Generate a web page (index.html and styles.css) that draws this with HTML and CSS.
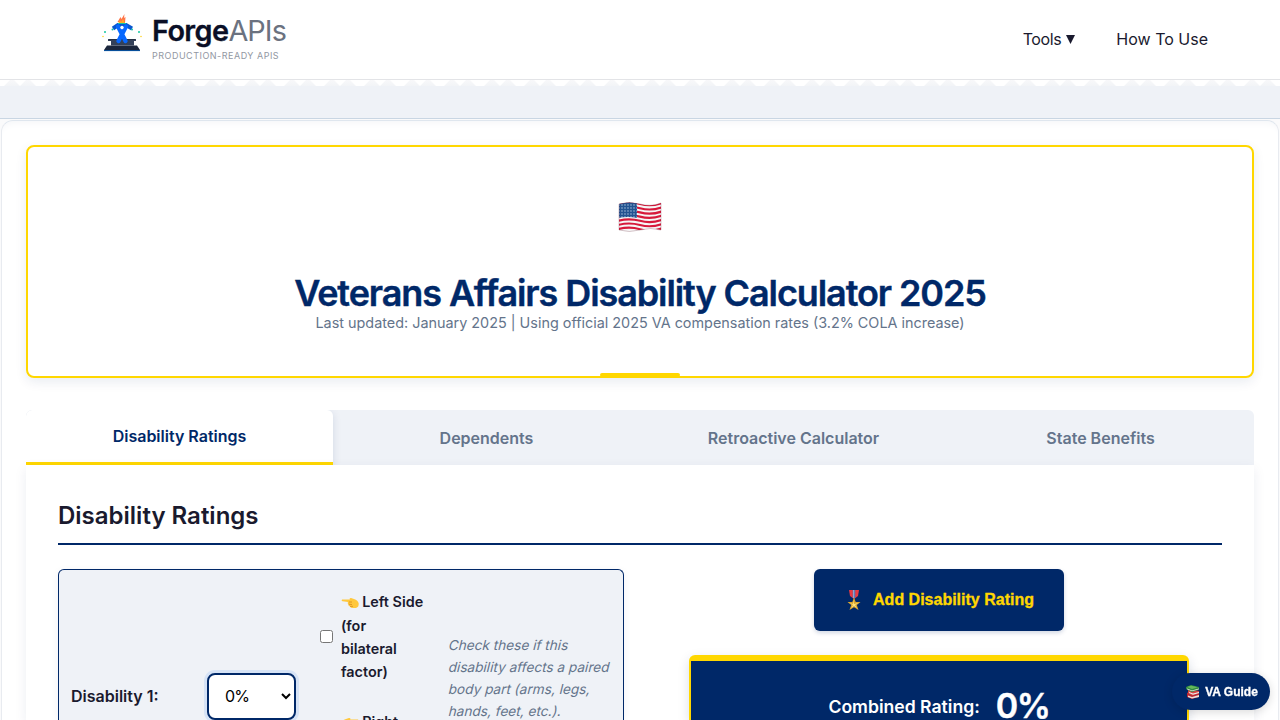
FILE: index.html
```html
<!DOCTYPE html>
<html lang="en">
<head>
<meta charset="utf-8">
<title>Veterans Affairs Disability Calculator 2025</title>
<link rel="stylesheet" href="styles.css">
</head>
<body>
<header class="site-header">
  <a class="brand">
    <svg class="brand-mark" viewBox="0 0 42 40" width="42" height="40">
      <path d="M3 37 6 32.500H36L39 37V38H3Z" fill="#1b263c"/><path d="M3 37.600H39" stroke="#0754a5"/>
      <path d="M7 26H35V28H33V32.500H10V28H7Z" fill="#34415a"/><path d="M8 26.500H34" stroke="#263044"/>
      <path d="M16.500 9 19.500 4 20.500 6 23.500 1 23 5 24.500 4 24 10Z" fill="#ff7547"/><path d="M17 11 19 7 20 9 22 6 24 11Z" fill="#ffad25"/>
      <path d="M12 15.500 17 12H25L31 15.500" fill="none" stroke="#0857d0" stroke-width="4"/>
      <path d="M17 13.500 24.500 28M25 13.500 17.500 28" fill="none" stroke="#0868ff" stroke-width="4.300" stroke-linecap="round"/>
      <circle cx="21" cy="14.500" r="1.700" fill="#fff"/>
      <path d="M17 10.500H25" stroke="#17c6a1"/>
      <circle cx="11.500" cy="16.500" r="1" fill="#14bea5"/><circle cx="31" cy="16.500" r="1" fill="#14bea5"/>
      <circle cx="4" cy="19" r="1" fill="#15c7a0"/><circle cx="38" cy="19" r="1" fill="#15c7a0"/>
      <circle cx="2" cy="23.500" r=".8" fill="#ffd32a"/><circle cx="40" cy="23.500" r=".8" fill="#ffd32a"/>
    </svg>
    <span class="brand-text"><span class="brand-name"><b>Forge</b><i>APIs</i></span><span class="tagline">PRODUCTION-READY APIS</span></span>
  </a>
  <nav class="nav"><a class="tools">Tools <svg class="caret" width="9" height="9" viewBox="0 0 9 9"><path d="M0 0H9L4.500 9Z" fill="#1a1a2e"/></svg></a><a>How To Use</a></nav>
</header>
<div class="strip">
  <svg class="zigzag" width="1280" height="6"><defs><linearGradient id="fade" x1="0" y1="0" x2="0" y2="1"><stop stop-color="#f8f8fa"/><stop offset="1" stop-color="#f2f4f7"/></linearGradient><pattern id="teeth" width="40" height="6" patternUnits="userSpaceOnUse"><path d="M4 6 10 0H14L20 6 26 0H30L36 6Z" fill="url(#fade)"/></pattern></defs><rect width="1280" height="6" fill="url(#teeth)"/></svg>
</div>
<main class="container">
  <section class="hero">
    <svg class="flag" width="44" height="32" viewBox="0 0 44 32">
      <defs>
        <clipPath id="wave"><path d="M1 3Q11 0 22 3T43 2V29Q33 26 22 29T1 29Z"/></clipPath>
        <pattern id="stars" width="3" height="3" patternUnits="userSpaceOnUse"><rect width="3" height="3" fill="#235391"/><circle cx="1" cy="1" r=".65" fill="#bfd3e8"/></pattern>
      </defs>
      <g clip-path="url(#wave)"><rect width="44" height="32" fill="#f6f6f6"/>
        <g fill="none" stroke="#d7193b" stroke-width="2.150"><path d="M0 3Q11 0 22 3T44 2"/><path d="M0 7.200Q11 4.200 22 7.200T44 6.200"/><path d="M0 11.400Q11 8.400 22 11.400T44 10.400"/><path d="M0 15.600Q11 12.600 22 15.600T44 14.600"/><path d="M0 19.800Q11 16.800 22 19.800T44 18.800"/><path d="M0 24Q11 21 22 24T44 23"/><path d="M0 28.200Q11 25.200 22 28.200T44 27.200"/></g>
        <path d="M0 1H19V17Q10 15 0 17Z" fill="url(#stars)"/>
      </g>
      <path d="M1 3Q11 0 22 3T43 2V29Q33 26 22 29T1 29Z" fill="none" stroke="#641b30" stroke-opacity=".35" stroke-width=".7"/>
    </svg>
    <h1>Veterans Affairs Disability Calculator 2025</h1>
    <p>Last updated: January 2025 | Using official 2025 VA compensation rates (3.2% COLA increase)</p>
    <span class="hero-accent"></span>
  </section>
  <div class="tabs"><button class="tab active">Disability Ratings</button><button class="tab">Dependents</button><button class="tab">Retroactive Calculator</button><button class="tab">State Benefits</button></div>
  <section class="panel">
    <h2>Disability Ratings</h2>
    <div class="columns">
      <div class="rating-row">
        <label class="rating-label">Disability 1:</label>
        <select class="rating-select"><option>0%</option></select>
        <div class="sides">
          <label class="side"><input type="checkbox"><span><svg class="hand" width="18" height="12" viewBox="0 0 18 12"><path d="M1 2.500Q0 4 1.500 4.300L7 5Q6 6.500 7.500 7.200 7 9 9 9.400 9.500 11 12 11H15Q18 10 17.700 6.500 17 3 13 2L10 1Q8 .8 8.800 2.600Z" fill="#ffc83d"/><path d="M7.500 7.200 11 7.500M9 9.400 12 9.300M8 5H11" fill="none" stroke="#d88c20" stroke-width=".8"/></svg> Left Side (for bilateral factor)</span></label>
          <label class="side"><span class="side-next"><svg class="hand" width="18" height="12" viewBox="0 0 18 12"><path d="M17 2.500Q18 4 16.500 4.300L11 5Q12 6.500 10.500 7.200 11 9 9 9.400 8.500 11 6 11H3Q0 10 .3 6.500 1 3 5 2L8 1Q10 .8 9.200 2.600Z" fill="#ffc83d"/></svg> Right</span></label>
        </div>
        <p class="hint"><span>Check these if this</span><span>disability affects a paired</span><span>body part (arms, legs,</span><span>hands, feet, etc.).</span></p>
      </div>
      <div class="summary">
        <button class="add"><svg width="14" height="21" viewBox="0 0 14 21"><path d="M2 0H12L11 6 7 9 3 6Z" fill="#e83a43"/><path d="M5.700 0H8.300V8H5.700Z" fill="#526eb0"/><path d="M6.700 0V8" stroke="#d9dced" stroke-width=".6"/><path d="M7 7.500 8.700 12H13.500L9.800 15 11.500 20 7 17.200 2.500 20 4.200 15 .5 12H5.300Z" fill="#d9a62f"/><path d="M7 10V14L11.500 13 8 15 10 18 7 16 4 18 6 15 2.500 13 6 14Z" fill="#ffe37c"/></svg><span>Add Disability Rating</span></button>
        <div class="result"><span class="result-label">Combined Rating:</span><strong>0%</strong></div>
      </div>
    </div>
  </section>
</main>
<button class="guide"><svg width="14" height="14" viewBox="0 0 14 14"><path d="M1 8 5 6 13 8V12L6 14 1 12Z" fill="#ba2732"/><path d="M2 10.500 6 12 13 10V12L6 13.500 2 12Z" fill="#eee2dc"/><path d="M2 5 6 4 13 6V8.500L6 10.500 2 8Z" fill="#d84845"/><path d="M3 7 7 8.500 13 7V8L7 9.700 3 8Z" fill="#eee"/><path d="M0 2 5 0 13 2V4.500L6 7 0 4Z" fill="#318b42"/><path d="M1 3.500 6 5.500 13 3.500V4.200L6 6.300 1 4.300Z" fill="#e7eee1"/><path d="M1 2 5 .8 12 2.300 6 4Z" fill="#65b85b"/></svg><span>VA Guide</span></button>
</body>
</html>
```
FILE: styles.css
```css
* { box-sizing: border-box; }
html, body { height: 720px; overflow: hidden; }
body { margin: 0; background: #fafafb; color: #1a1a2e; font-family: Inter, "Liberation Sans", sans-serif; line-height: 1.6; display: flex; flex-direction: column; }
button { border: 0; padding: 0; }
.site-header { height: 80px; flex: none; display: flex; justify-content: space-between; padding: 0 72px 0 101px; background: #fff; border-bottom: 1px solid #e3e4e7; }
.brand { display: flex; gap: 9px; padding-top: 13px; }
.brand-text { display: flex; flex-direction: column; }
.brand-name { display: flex; height: 36px; font-size: 28.8px; line-height: 36px; color: #0a0f26; }
.brand-name b { font-weight: 600; letter-spacing: -.6px; -webkit-text-stroke: .3px #0a0f26; }
.brand-name i { font-style: normal; font-weight: 400; color: #6b7280; letter-spacing: -.9px; }
.tagline { font-size: 9px; line-height: 14px; letter-spacing: .5px; color: #9297a2; }
.nav { display: flex; align-items: center; gap: 41px; font-size: 16px; }
.tools { letter-spacing: -.4px; }
.caret { margin-left: 1px; vertical-align: 1px; }
.strip { height: 39px; flex: none; background: #eff2f7; border-bottom: 1px solid #c9d6e3; }
.zigzag { display: block; background: #fff; }
.container { margin: 1px 1px 0; flex: 1; min-height: 0; overflow: hidden; padding: 24px 24px 0; background: #fff; border: 1px solid #e8ebf0; border-top-color: #dfe6ee; border-bottom: 0; border-radius: 12px 12px 0 0; box-shadow: inset 0 8px 8px -7px #f3f4f7; display: flex; flex-direction: column; }
.hero { position: relative; height: 233px; flex: none; border: 2px solid #ffd700; border-radius: 8px; display: flex; flex-direction: column; align-items: center; box-shadow: 0 4px 12px rgba(0,40,104,.09); background: #fff; }
.flag { margin-top: 54px; flex: none; }
.hero h1 { margin: 39px 0 0; font-size: 36px; line-height: 43px; font-weight: 600; color: #002868; letter-spacing: -1.09px; -webkit-text-stroke: .4px #002868; white-space: nowrap; }
.hero p { margin: -4px 0 0; font-size: 14.4px; line-height: 23px; color: #64748b; }
.hero-accent { position: absolute; bottom: -1px; left: 572px; width: 80px; height: 4px; background: #ffd700; border-radius: 2px; }
.tabs { display: grid; grid-template-columns: repeat(4, 1fr); height: 55px; flex: none; margin-top: 32px; border-radius: 6px 6px 0 0; overflow: hidden; background: #eff2f7; }
.tab { background: none; font: 600 16px Inter, sans-serif; color: #64748b; }
.tab.active { background: #fff; color: #002868; border-bottom: 3px solid #ffd700; border-radius: 6px 6px 0 0; box-shadow: 0 2px 8px rgba(0,40,104,.12); }
.panel { flex: 1; min-height: 0; display: flex; flex-direction: column; padding: 32px 32px 0; background: #fff; box-shadow: 0 4px 12px rgba(0,40,104,.08); }
.panel h2 { height: 48px; flex: none; margin: 0 0 24px; border-bottom: 2px solid #002868; font-size: 24px; font-weight: 600; line-height: 38px; }
.columns { flex: 1; min-height: 0; display: grid; grid-template-columns: 566px 566px; grid-template-rows: 100%; gap: 32px; }
.rating-row { display: flex; align-items: flex-start; border: 1px solid #002868; border-bottom: 0; border-radius: 6px 6px 0 0; background: #eff2f7; padding: 20px 12px 0; box-shadow: 0 2px 8px rgba(0,40,104,.06); }
.rating-label { width: 136px; margin-top: 94px; font-size: 16px; font-weight: 600; }
.rating-select { width: 89px; height: 47px; margin-top: 83px; padding: 0 0 1px 12px; border: 2px solid #002868; border-radius: 8px; background: #fff; color: #000; font: 16px Inter, sans-serif; letter-spacing: -.8px; box-shadow: 0 0 0 3px #d6e3f6; }
.sides { width: 112px; margin: .3px 0 0 24px; display: flex; flex-direction: column; gap: 27px; }
.side { display: flex; align-items: center; gap: 8px; font-size: 14.4px; line-height: 23.2px; font-weight: 600; }
.side input { width: 13px; height: 13px; margin: 0; flex: none; }
.side span { width: 84px; }
.side .side-next { margin-left: 21px; }
.hand { vertical-align: -2px; margin-right: -.5px; }
.hint { margin: 44px 0 0 17px; display: flex; flex-direction: column; align-items: flex-start; font-size: 13.6px; line-height: 22px; color: #64748b; flex: none; white-space: nowrap; }
.hint span { transform: skewX(-14deg); letter-spacing: .01px; }
.summary { display: flex; flex-direction: column; align-items: center; gap: 24px; min-height: 0; }
.add { display: flex; flex: none; align-items: center; justify-content: center; gap: 12px; width: 250px; height: 62px; background: #002868; color: #ffd700; border-radius: 6px; font: 600 16px "Liberation Sans", sans-serif; -webkit-text-stroke: .3px #ffd700; box-shadow: 0 2px 4px rgba(0,40,104,.18); }
.add svg { margin-left: 3px; }
.result { width: 500px; flex: 1; min-height: 0; padding: 21px 0 0; display: flex; justify-content: center; align-items: flex-start; gap: 16px; color: #fff; background: #002868; border: 2px solid #ffd700; border-top-width: 6px; border-bottom: 0; border-radius: 6px 6px 0 0; box-shadow: 0 4px 12px rgba(0,40,104,.15); }
.result-label { margin-top: 11px; font-size: 17.6px; line-height: 28px; font-weight: 600; }
.result strong { font-size: 34px; line-height: 48px; font-weight: 600; letter-spacing: -1.4px; -webkit-text-stroke: .4px #fff; }
.guide { position: fixed; right: 10px; bottom: 10px; width: 98px; height: 37px; display: flex; align-items: center; justify-content: center; gap: 5px; padding-left: 2px; border-radius: 19px; background: #002868; color: #fff; font: 700 12px "Liberation Sans", sans-serif; -webkit-text-stroke: .3px #fff; box-shadow: 0 2px 10px rgba(0,0,0,.15); }
```
